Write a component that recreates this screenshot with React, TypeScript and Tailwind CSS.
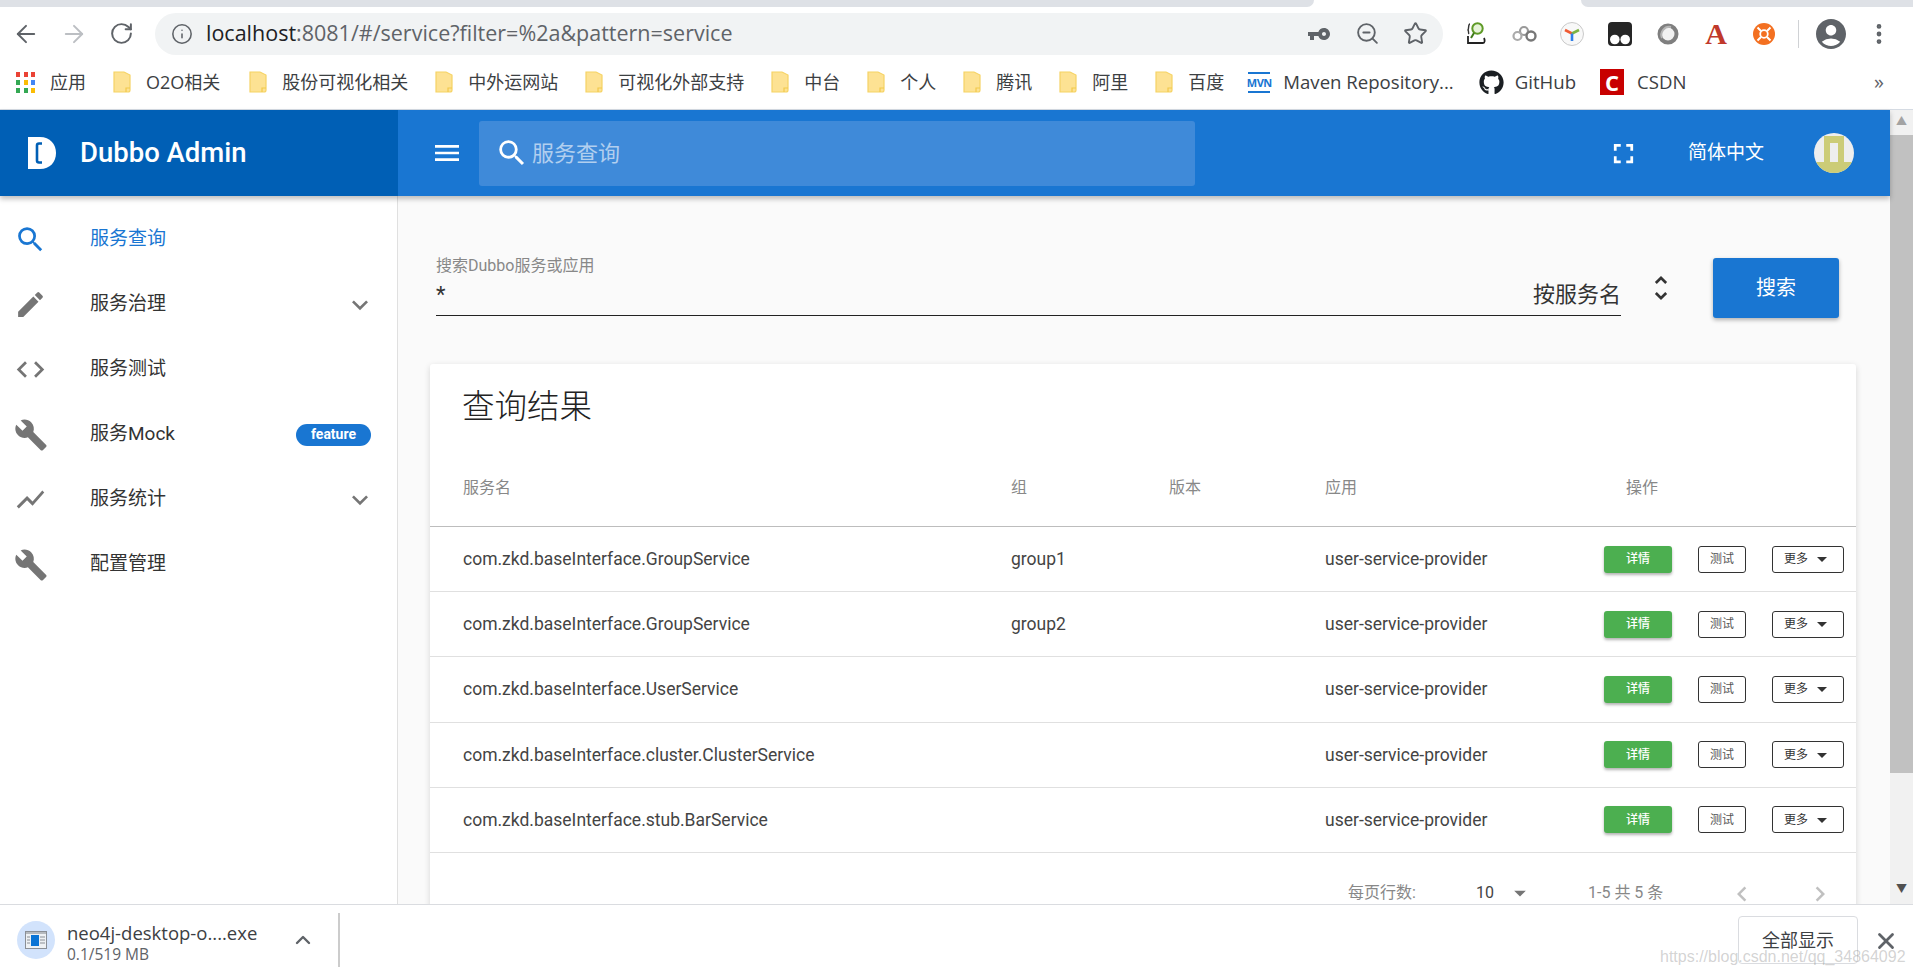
import React from "react";
import { ArrowLeft, ArrowRight, RotateCw, Info, Star, ZoomOut, MoreVertical, ChevronUp, X } from "lucide-react";
import {
  MdSearch,
  MdEdit,
  MdCode,
  MdBuild,
  MdShowChart,
  MdExpandMore,
  MdMenu,
  MdFullscreen,
  MdUnfoldMore,
  MdChevronLeft,
  MdChevronRight,
  MdArrowDropDown,
  MdVpnKey,
  MdAccountCircle,
} from "react-icons/md";
import { FaGithub } from "react-icons/fa";

const sysFont = "font-['Open_Sans','Noto_Sans_CJK_SC',sans-serif]";
const colGrid = "grid grid-cols-[548px_158px_156px_279px_1fr] items-center pl-[33px]";

const bookmarks = [
  { label: "O2O相关", ml: "ml-[27px]" },
  { label: "股份可视化相关", ml: "ml-[29px]" },
  { label: "中外运网站", ml: "ml-[27px]" },
  { label: "可视化外部支持", ml: "ml-[27px]" },
  { label: "中台", ml: "ml-[27px]" },
  { label: "个人", ml: "ml-[27px]" },
  { label: "腾讯", ml: "ml-[27px]" },
  { label: "阿里", ml: "ml-[27px]" },
  { label: "百度", ml: "ml-[27px]" },
];

const navItems = [
  { label: "服务查询", icon: MdSearch, size: 33, active: true },
  { label: "服务治理", icon: MdEdit, size: 33, chevron: true },
  { label: "服务测试", icon: MdCode, size: 33 },
  { label: "服务Mock", icon: MdBuild, size: 34, badge: "feature" },
  { label: "服务统计", icon: MdShowChart, size: 33, chevron: true },
  { label: "配置管理", icon: MdBuild, size: 34 },
];

const rows = [
  { name: "com.zkd.baseInterface.GroupService", group: "group1" },
  { name: "com.zkd.baseInterface.GroupService", group: "group2" },
  { name: "com.zkd.baseInterface.UserService", group: "" },
  { name: "com.zkd.baseInterface.cluster.ClusterService", group: "" },
  { name: "com.zkd.baseInterface.stub.BarService", group: "" },
];

const FolderIcon = () => (
  <svg width="18" height="22" viewBox="0 0 18 22" className="shrink-0">
    <path d="M1 1h10l6 3v15a2 2 0 0 1-2 2H1z" fill="#fde293" stroke="#f6d365" strokeWidth="1.2" />
    <path d="M13 21v-4h4" fill="none" stroke="#f2c94c" strokeWidth="1.2" />
  </svg>
);

const AppsIcon = () => {
  const colors = ["#ea4335", "#ea4335", "#ea4335", "#34a853", "#fbbc04", "#4285f4", "#34a853", "#34a853", "#fbbc04"];
  return (
    <div className="grid grid-cols-3 gap-[3px] w-[20px] shrink-0">
      {colors.map((c, i) => (
        <svg key={i} width="4" height="5" className="block">
          <rect width="4" height="5" fill={c} />
        </svg>
      ))}
    </div>
  );
};

const ExtSlot = ({ children }: { children: React.ReactNode }) => (
  <div className="w-[48px] flex items-center justify-center">{children}</div>
);

const ExtensionIcons = () => (
  <div className="flex items-center ml-[9px]">
    <ExtSlot>
      <svg width="20" height="23" viewBox="0 0 20 23">
        <path d="M4 2C2 2 3 7 2 8c1 1 0 3 1 4" fill="none" stroke="#333" strokeWidth="1.4" />
        <circle cx="11.500" cy="6.500" r="5.200" fill="#e6f3d8" stroke="#5e9a26" strokeWidth="2" />
        <path d="M8 11l-3 5" stroke="#3f7a1a" strokeWidth="2" />
        <path d="M2 14v7h15c2 0 2-3 1-5" fill="none" stroke="#222" strokeWidth="1.800" />
      </svg>
    </ExtSlot>
    <ExtSlot>
      <svg width="25" height="18" viewBox="0 0 25 18">
        <circle cx="12" cy="6" r="4" fill="none" stroke="#999" strokeWidth="2.200" />
        <circle cx="5.500" cy="11" r="4" fill="none" stroke="#aaa" strokeWidth="2.200" />
        <circle cx="19" cy="11" r="4.500" fill="none" stroke="#777" strokeWidth="2.400" />
      </svg>
    </ExtSlot>
    <ExtSlot>
      <svg width="24" height="24" viewBox="0 0 24 24">
        <circle cx="12" cy="12" r="11.500" fill="#f8f8f8" stroke="#c9c9c9" />
        <path d="M5 8l7 3.500" stroke="#ef5a32" strokeWidth="2.600" />
        <path d="M19 8l-7 3.500" stroke="#7cb342" strokeWidth="2.600" />
        <path d="M12 11.500V19" stroke="#2f7fe8" strokeWidth="2.600" />
      </svg>
    </ExtSlot>
    <ExtSlot>
      <svg width="24" height="24" viewBox="0 0 24 24">
        <rect width="24" height="24" rx="4" fill="#262626" />
        <circle cx="6.800" cy="17.500" r="4.800" fill="#fff" />
        <circle cx="17.200" cy="17.500" r="4.800" fill="#fff" />
      </svg>
    </ExtSlot>
    <ExtSlot>
      <svg width="22" height="22" viewBox="0 0 22 22">
        <circle cx="11" cy="11" r="8.500" fill="#f1f1f1" stroke="#7f7f7f" strokeWidth="4" />
        <path d="M5 15a8 8 0 0 1 9-11" fill="none" stroke="#b5b5b5" strokeWidth="2" />
      </svg>
    </ExtSlot>
    <ExtSlot>
      <span className="text-[30px] leading-[26px] font-bold text-[#c0392b] font-['Liberation_Serif',serif]">A</span>
    </ExtSlot>
    <ExtSlot>
      <svg width="22" height="22" viewBox="0 0 22 22">
        <circle cx="11" cy="11" r="11" fill="#f37021" />
        <circle cx="11" cy="11" r="3.800" fill="none" stroke="#fff" strokeWidth="1.800" />
        <path d="M4.500 4.500l3.500 3.500M17.500 4.500 14 8M4.500 17.500 8 14M17.500 17.500 14 14" stroke="#fff" strokeWidth="2" />
      </svg>
    </ExtSlot>
  </div>
);

const BrowserChrome = () => (
  <div className={`h-[110px] shrink-0 bg-white border-b border-[#d5dbe3] flex flex-col ${sysFont}`}>
    <div className="h-[7px] flex">
      <div className="w-[1314px] bg-[#dee1e6] rounded-br-[7px]" />
      <div className="w-[267px]" />
      <div className="flex-1 bg-[#dee1e6] rounded-bl-[7px]" />
    </div>
    <div className="h-[48px] flex items-center pt-[5px] pl-[12px]">
      <ArrowLeft size={28} strokeWidth={1.7} className="text-[#5f6368]" />
      <ArrowRight size={28} strokeWidth={1.7} className="ml-[20px] text-[#bcbfc3]" />
      <RotateCw size={25} strokeWidth={1.9} className="ml-[21px] text-[#5f6368]" />
      <div className="ml-[21px] w-[1288px] h-[42px] rounded-full bg-[#f1f3f4] flex items-center pl-[16px]">
        <Info size={22} strokeWidth={1.7} className="text-[#5f6368]" />
        <span className="ml-[13px] text-[21.500px] text-[#5f6368]">
          <span className="text-[#202124]">localhost</span>:8081/#/service?filter=%2a&amp;pattern=service
        </span>
        <div className="ml-auto flex items-center pr-[15px]">
          <MdVpnKey size={24} className="text-[#5f6368] -scale-x-100" />
          <ZoomOut size={25} strokeWidth={1.8} className="ml-[24px] text-[#5f6368]" />
          <Star size={25} strokeWidth={1.8} className="ml-[23px] text-[#5f6368]" />
        </div>
      </div>
      <ExtensionIcons />
      <div className="ml-[10px] w-px h-[28px] bg-[#d0d2d5]" />
      <MdAccountCircle size={36} className="ml-[14px] text-[#5f6368]" />
      <MoreVertical size={26} strokeWidth={2.4} className="ml-[17px] text-[#5f6368]" />
    </div>
    <div className="h-[54px] flex items-center pl-[16px] text-[18px] text-[#3c4043] whitespace-nowrap">
      <AppsIcon />
      <span className="ml-[14px]">应用</span>
      {bookmarks.map((b) => (
        <React.Fragment key={b.label}>
          <div className={b.ml}>
            <FolderIcon />
          </div>
          <span className="ml-[15px]">{b.label}</span>
        </React.Fragment>
      ))}
      <div className="ml-[24px] w-[22px] h-[21px] flex flex-col justify-between items-center shrink-0">
        <div className="w-[22px] h-[2px] bg-[#1976d2]" />
        <span className="text-[11px] leading-[11px] font-bold tracking-[-0.5px] text-[#1976d2]">MVN</span>
        <div className="w-[22px] h-[2px] bg-[#1976d2]" />
      </div>
      <span className="ml-[13px] text-[18.600px]">Maven Repository...</span>
      <FaGithub size={25} className="ml-[25px] text-[#1b1f23]" />
      <span className="ml-[11px] text-[18.600px]">GitHub</span>
      <div className="ml-[24px] w-[24px] h-[26px] bg-[#c80000] flex items-center justify-center text-white font-bold text-[22px] leading-none">C</div>
      <span className="ml-[13px] text-[18.600px]">CSDN</span>
      <span className="ml-auto mr-[29px] text-[#5f6368] text-[20px]">»</span>
    </div>
  </div>
);

const AppHeader = () => (
  <header className="h-[86px] shrink-0 flex bg-[#1976d2] relative z-10 shadow-[0_3px_5px_rgba(0,0,0,0.25)]">
    <div className="w-[398px] shrink-0 bg-[#005fb5] flex items-center pl-[28px]">
      <svg width="28" height="32" viewBox="0 0 28 32">
        <path d="M0 0h12c10 0 16 7 16 16s-6 16-16 16H0z" fill="#fff" />
        <path d="M14 6.500h-3a2 2 0 0 0-2 2v15a2 2 0 0 0 2 2h3" fill="none" stroke="#005fb5" strokeWidth="2.600" />
      </svg>
      <span className="ml-[24px] text-[27.500px] font-medium text-white">Dubbo Admin</span>
    </div>
    <div className="flex-1 flex items-center">
      <MdMenu size={32} className="ml-[33px] text-white" />
      <div className="ml-[16px] w-[716px] h-[65px] rounded-[3px] bg-[#3f8ad9] flex items-center pl-[16px]">
        <MdSearch size={34} className="text-white" />
        <span className="ml-[3px] text-[22px] text-white/60">服务查询</span>
      </div>
      <MdFullscreen size={33} className="ml-[412px] text-white" />
      <span className="ml-[48px] text-[19px] text-white">简体中文</span>
      <svg width="40" height="40" viewBox="0 0 40 40" className="ml-[50px]">
        <defs>
          <clipPath id="avatar-clip">
            <circle cx="20" cy="20" r="20" />
          </clipPath>
        </defs>
        <g clipPath="url(#avatar-clip)">
          <rect width="40" height="40" fill="#eeeeee" />
          <rect y="29" width="40" height="11" fill="#cccc77" />
          <rect x="10" y="3" width="20" height="27" fill="#cccc77" />
          <rect x="16" y="10" width="8" height="19" fill="#eeeeee" />
        </g>
      </svg>
    </div>
  </header>
);

const Sidebar = () => (
  <nav className="w-[398px] shrink-0 bg-white border-r border-[#e0e0e0] pt-[11px]">
    {navItems.map((item) => {
      const Icon = item.icon;
      return (
        <div key={item.label} className="h-[65px] flex items-center pl-[14px] pr-[21px]">
          <div className="w-[33px] flex justify-center">
            <Icon size={item.size} className={`shrink-0 ${item.active ? "text-[#1976d2]" : "text-[#757575]"}`} />
          </div>
          <span className={`ml-[43px] text-[19px] ${item.active ? "text-[#1976d2]" : "text-[#333333]"}`}>{item.label}</span>
          {item.chevron && <MdExpandMore size={32} className="ml-auto text-[#757575]" />}
          {item.badge && (
            <span className="ml-auto mr-[5px] w-[75px] h-[22px] rounded-full bg-[#1976d2] text-white text-[14px] font-bold flex items-center justify-center">
              {item.badge}
            </span>
          )}
        </div>
      );
    })}
  </nav>
);

const SearchRow = () => (
  <div className="flex items-start pl-[38px]">
    <div className="w-[1185px] h-[58px] border-b border-[#222222]">
      <div className="text-[16px] leading-[16px] text-[#888888]">搜索Dubbo服务或应用</div>
      <div className="h-[41px] flex items-center justify-between">
        <span className="text-[22px] text-[#333333]">*</span>
        <span className="text-[22px] text-[#333333]">按服务名</span>
      </div>
    </div>
    <MdUnfoldMore size={32} className="ml-[24px] mt-[14px] text-[#333333]" />
    <button className="ml-[36px] w-[126px] h-[60px] rounded-[3px] bg-[#1976d2] text-white text-[20px] shadow-[0_2px_4px_rgba(0,0,0,0.3)]">
      搜索
    </button>
  </div>
);

const ResultRow = ({ name, group }: { name: string; group: string }) => (
  <div className={`${colGrid} h-[65.2px] border-b border-[#e0e0e0] text-[17.500px] text-[#444444]`}>
    <span>{name}</span>
    <span>{group}</span>
    <span />
    <span>user-service-provider</span>
    <div className="flex items-center text-[12px]">
      <button className="w-[68px] h-[27px] rounded-[3px] bg-[#4caf50] text-white font-medium shadow-[0_2px_3px_rgba(0,0,0,0.3)]">详情</button>
      <button className="ml-[26px] w-[48px] h-[27px] rounded-[3px] border border-[#333333] text-[#555555]">测试</button>
      <button className="ml-[26px] w-[72px] h-[27px] rounded-[3px] border border-[#333333] text-[#333333] flex items-center pl-[11px]">
        更多
        <MdArrowDropDown size={24} className="ml-[2px]" />
      </button>
    </div>
  </div>
);

const ResultCard = () => (
  <div className="ml-[32px] mt-[46px] w-[1426px] bg-white rounded-t-[3px] shadow-[0_2px_6px_rgba(0,0,0,0.15)]">
    <div className="h-[86px] flex items-center pl-[32px] text-[32.500px] font-light text-[#222222]">查询结果</div>
    <div className={`${colGrid} h-[77px] border-b border-[#bdbdbd] text-[16px] text-[#888888]`}>
      <span>服务名</span>
      <span>组</span>
      <span>版本</span>
      <span>应用</span>
      <span className="pl-[22px]">操作</span>
    </div>
    {rows.map((r, i) => (
      <ResultRow key={i} name={r.name} group={r.group} />
    ))}
    <div className="h-[80px] pt-[26px] flex items-start pl-[918px] text-[16px] leading-[28px] text-[#888888]">
      <span className="w-[128px]">每页行数:</span>
      <span className="w-[30px] text-[#444444]">10</span>
      <MdArrowDropDown size={28} className="text-[#757575]" />
      <span className="ml-[54px] w-[139px]">1-5 共 5 条</span>
      <MdChevronLeft size={30} className="text-[#c0c0c0]" />
      <MdChevronRight size={30} className="ml-[48px] text-[#c0c0c0]" />
    </div>
  </div>
);

const Scrollbar = () => (
  <div className="w-[23px] shrink-0 bg-[#f1f1f1] flex flex-col">
    <div className="h-[25px] flex items-center justify-center text-[#a3a3a3] text-[11px]">▲</div>
    <div className="h-[638px] bg-[#c1c1c1]" />
    <div className="mt-auto h-[28px] flex items-center justify-center text-[#505050] text-[11px]">▼</div>
  </div>
);

const DownloadBar = () => (
  <div className={`h-[71px] shrink-0 bg-white border-t border-[#dadce0] flex items-center relative ${sysFont}`}>
    <div className="ml-[17px] w-[38px] h-[38px] rounded-full bg-[#d2e3fc] flex items-center justify-center shrink-0">
      <svg width="22" height="18" viewBox="0 0 22 18">
        <rect x="0.500" y="0.500" width="21" height="17" fill="#eef1f4" stroke="#8a8f96" />
        <rect x="1" y="1" width="20" height="2" fill="#b5b9be" />
        <rect x="6" y="4" width="8" height="11" fill="#0b74d5" />
        <path d="M2 6h3M2 9h3M2 12h3M15 6h5M15 9h5M15 12h5" stroke="#8a8f96" />
      </svg>
    </div>
    <div className="ml-[12px] w-[200px] pt-[5px]">
      <div className="text-[18.500px] leading-[23px] text-[#3c4043]">neo4j-desktop-o....exe</div>
      <div className="text-[15.500px] leading-[20px] text-[#5f6368]">0.1/519 MB</div>
    </div>
    <ChevronUp size={24} strokeWidth={2.4} className="ml-[24px] text-[#5f6368]" />
    <div className="ml-[23px] w-[2px] h-[54px] bg-[#cccccc]" />
    <button className="ml-auto mr-[55px] w-[120px] h-[48px] rounded-[4px] border border-[#dadce0] text-[18px] text-[#3c4043]">全部显示</button>
    <X size={26} strokeWidth={2.6} className="absolute right-[14px] top-[23px] text-[#5f6368]" />
    <span className="absolute left-[1660px] top-[42px] text-[16px] leading-[20px] text-[#8f8f8f]/40 font-['Liberation_Sans',sans-serif]">
      https://blog.csdn.net/qq_34864092
    </span>
  </div>
);

export default function App() {
  return (
    <div className="w-[1913px] h-[975px] flex flex-col overflow-hidden bg-white font-['Roboto','Noto_Sans_CJK_SC',sans-serif]">
      <BrowserChrome />
      <div className="flex-1 min-h-0 flex">
        <div className="flex-1 min-w-0 flex flex-col">
          <AppHeader />
          <div className="flex-1 min-h-0 flex">
            <Sidebar />
            <main className="flex-1 min-w-0 bg-[#fafafa] pt-[62px] overflow-hidden">
              <SearchRow />
              <ResultCard />
            </main>
          </div>
        </div>
        <Scrollbar />
      </div>
      <DownloadBar />
    </div>
  );
}
